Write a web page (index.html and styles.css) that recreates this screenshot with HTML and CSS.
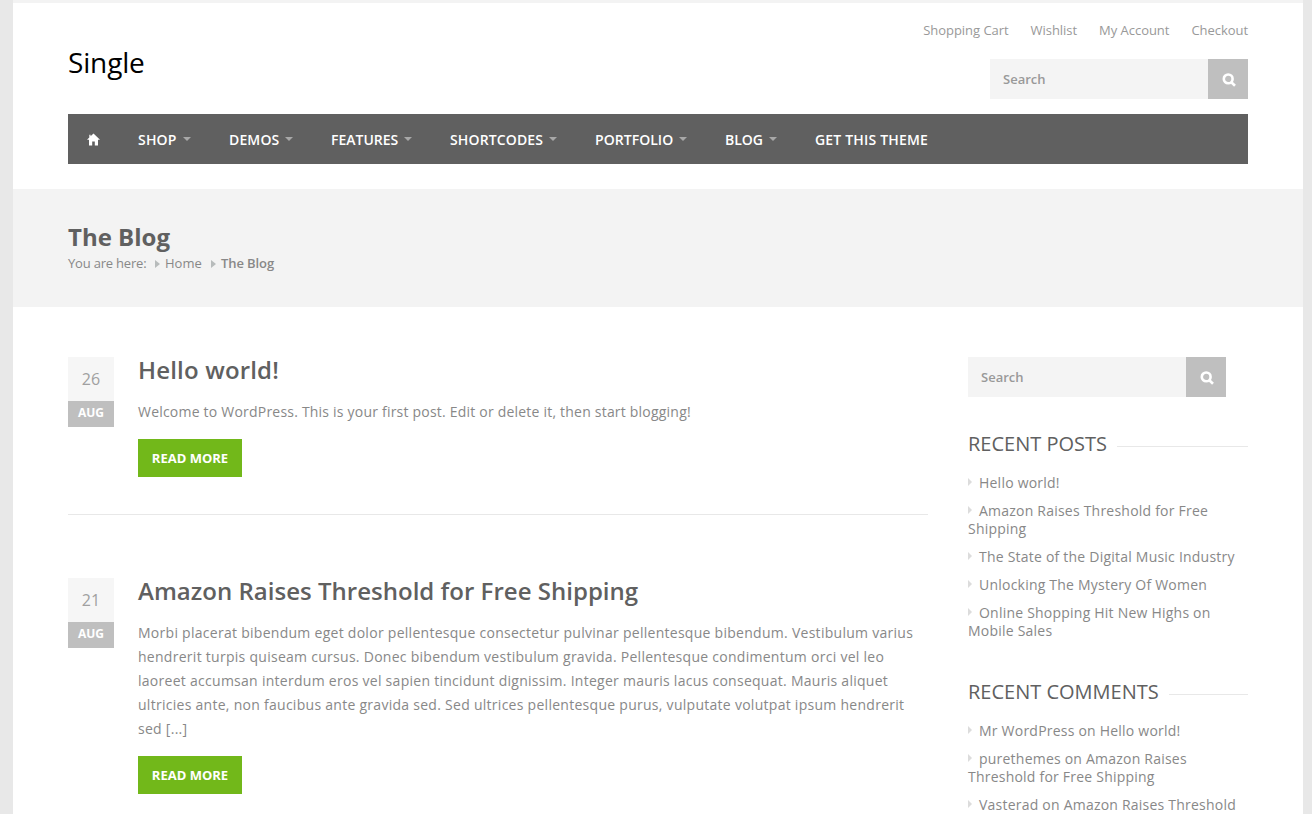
FILE: index.html
```html
<!DOCTYPE html>
<html lang="en">
<head>
<meta charset="utf-8">
<title>The Blog</title>
<link rel="stylesheet" href="styles.css">
</head>
<body>
<div class="wrapper">
  <header class="header container">
    <div class="header-top">
      <div class="logo">Single</div>
      <div class="header-side">
        <nav class="top-links"><a>Shopping Cart</a><a>Wishlist</a><a>My Account</a><a>Checkout</a></nav>
        <form class="search">
          <input type="text" placeholder="Search">
          <button type="button" aria-label="Search"><svg width="14" height="14" viewBox="0 0 14 14"><circle cx="6.2" cy="5.9" r="4.4"/><path d="M9.3 9.2l3.7 3.6"/></svg></button>
        </form>
      </div>
    </div>
    <nav class="menu">
      <a class="home"><svg width="13" height="13" viewBox="0 0 13 13"><path d="M6.5 0.4L13 6.8H11V12.5H7.8V8.6H5.2V12.5H2V6.8H0L2.3 4.5V1.8H3.6V3.2Z"/></svg></a>
      <a class="w-shop">SHOP<i class="caret"></i></a>
      <a class="w-demos">DEMOS<i class="caret"></i></a>
      <a class="w-features">FEATURES<i class="caret"></i></a>
      <a class="w-shortcodes">SHORTCODES<i class="caret"></i></a>
      <a class="w-portfolio">PORTFOLIO<i class="caret"></i></a>
      <a class="w-blog">BLOG<i class="caret"></i></a>
      <a class="w-theme">GET THIS THEME</a>
    </nav>
  </header>

  <section class="titlebar">
    <div class="container">
      <h1>The Blog</h1>
      <div class="crumbs"><span class="here">You are here:</span><i class="arrow"></i><a class="crumb-home">Home</a><i class="arrow"></i><span class="current">The Blog</span></div>
    </div>
  </section>

  <div class="content container">
    <main class="posts">
      <article class="post">
        <div class="date"><span class="day">26</span><span class="month">AUG</span></div>
        <div class="body">
          <h2 class="t1">Hello world!</h2>
          <p class="short">Welcome to WordPress. This is your first post. Edit or delete it, then start blogging!</p>
          <a class="button">READ MORE</a>
        </div>
      </article>
      <article class="post">
        <div class="date"><span class="day">21</span><span class="month">AUG</span></div>
        <div class="body">
          <h2 class="t2">Amazon Raises Threshold for Free Shipping</h2>
          <p>Morbi placerat bibendum eget dolor pellentesque consectetur pulvinar pellentesque bibendum. Vestibulum varius<br>hendrerit turpis quiseam cursus. Donec bibendum vestibulum gravida. Pellentesque condimentum orci vel leo<br>laoreet accumsan interdum eros vel sapien tincidunt dignissim. Integer mauris lacus consequat. Mauris aliquet<br>ultricies ante, non faucibus ante gravida sed. Sed ultrices pellentesque purus, vulputate volutpat ipsum hendrerit<br>sed [...]</p>
          <a class="button">READ MORE</a>
        </div>
      </article>
    </main>
    <aside class="sidebar">
      <form class="search">
        <input type="text" placeholder="Search">
        <button type="button" aria-label="Search"><svg width="14" height="14" viewBox="0 0 14 14"><circle cx="6.2" cy="5.9" r="4.4"/><path d="M9.3 9.2l3.7 3.6"/></svg></button>
      </form>
      <section class="widget">
        <h3><span>RECENT POSTS</span></h3>
        <ul>
          <li>Hello world!</li>
          <li>Amazon Raises Threshold for Free<br>Shipping</li>
          <li>The State of the Digital Music Industry</li>
          <li>Unlocking The Mystery Of Women</li>
          <li>Online Shopping Hit New Highs on<br>Mobile Sales</li>
        </ul>
      </section>
      <section class="widget">
        <h3><span>RECENT COMMENTS</span></h3>
        <ul>
          <li>Mr WordPress on Hello world!</li>
          <li>purethemes on Amazon Raises<br>Threshold for Free Shipping</li>
          <li>Vasterad on Amazon Raises Threshold</li>
        </ul>
      </section>
    </aside>
  </div>
</div>
</body>
</html>
```
FILE: styles.css
```css
* { box-sizing: border-box; }
html, body { margin: 0; height: 814px; overflow: hidden; }
body {
  background: #e8e8e8;
  color: #888;
  font: 14px/24px "Open Sans", "Noto Sans", sans-serif;
}
h1, h2, h3, p, ul { margin: 0; padding: 0; }
.wrapper {
  width: 1290px;
  height: 814px;
  margin-left: 13px;
  overflow: hidden;
  background: #fff;
  border-top: 3px solid #f3f3f3;
}
.container { width: 1180px; margin: 0 auto; }

.header { height: 186px; }
.header-top { display: flex; justify-content: space-between; height: 111px; }
.logo { padding-top: 41px; font-size: 28px; line-height: 36px; letter-spacing: -0.15px; color: #000; }
.header-side { display: flex; flex-direction: column; align-items: flex-end; }
.top-links {
  display: flex;
  gap: 22px;
  padding-top: 17px;
  height: 56px;
  font-size: 13px;
  line-height: 20px;
  letter-spacing: -0.04px;
  color: #999;
}
.search { display: flex; width: 258px; height: 40px; }
.search input {
  width: 218px;
  height: 40px;
  padding: 0 13px;
  border: 0;
  background: #f4f4f4;
  font: 600 13px "Open Sans", sans-serif;
}
.search input::placeholder { color: #999; opacity: 1; }
.search button {
  display: flex;
  align-items: center;
  justify-content: center;
  width: 40px;
  height: 40px;
  padding: 0;
  border: 0;
  background: #bfbfbf;
}
.search svg { fill: none; stroke: #fff; stroke-width: 2.6; margin: 1px 0 0 1px; }
.menu { display: flex; height: 50px; background: #606060; color: #fff; font-weight: 600; line-height: 51px; }
.menu a { display: flex; align-items: center; justify-content: space-between; padding: 0 19px; white-space: nowrap; }
.menu svg { fill: #fff; }
.menu .home { width: 51px; }
.w-shop { width: 91px; letter-spacing: 0.2px; }
.w-demos { width: 102px; letter-spacing: 0.15px; }
.w-features { width: 119px; }
.w-shortcodes { width: 145px; letter-spacing: 0.13px; }
.w-portfolio { width: 130px; letter-spacing: 0.04px; }
.w-blog { width: 90px; }
.w-theme { letter-spacing: 0.18px; }
.caret { border: 4px solid transparent; border-top-color: #a8a8a8; border-bottom: 0; margin-top: -1px; }

.titlebar { height: 118px; padding-top: 33px; background: #f3f3f3; }
.titlebar h1 { height: 31px; font-size: 24px; line-height: 30px; font-weight: 700; color: #606060; }
.crumbs { display: flex; align-items: center; height: 21px; font-size: 13px; line-height: 21px; }
.arrow { width: 0; border: 4px solid transparent; border-left: 5px solid #b8bcbc; border-right: 0; }
.here { width: 87px; letter-spacing: -0.2px; }
.crumb-home { box-sizing: content-box; width: 46px; padding-left: 5px; }
.current { padding-left: 5px; font-weight: 600; letter-spacing: -0.1px; }

.content { display: flex; justify-content: space-between; padding-top: 50px; }
.posts { width: 860px; }
.post { display: flex; gap: 24px; padding-bottom: 37px; margin-bottom: 63px; border-bottom: 1px solid #e8e8e8; }
.date { width: 46px; text-align: center; }
.day, .month { display: block; }
.day { height: 44px; background: #f6f6f6; color: #a0a0a0; font-size: 16px; line-height: 44px; }
.month { height: 26px; background: #bfbfbf; color: #fff; font-size: 12px; font-weight: 700; line-height: 24px; }
.body h2 { height: 43px; font-size: 24px; line-height: 26px; font-weight: 600; color: #606060; white-space: nowrap; }
.body .t1 { letter-spacing: 0.17px; }
.body .t2 { letter-spacing: 0.02px; }
.body p { white-space: nowrap; margin-bottom: 15px; letter-spacing: 0.275px; }
.body .short { letter-spacing: 0.21px; }
.button {
  display: block;
  width: 104px;
  height: 38px;
  background: #72b81a;
  color: #fff;
  font-size: 13px;
  font-weight: 700;
  line-height: 39px;
  text-align: center;
}
.sidebar { width: 280px; }
.widget { padding-top: 35px; }
.widget + .widget { padding-top: 30px; }
.widget h3 {
  display: flex;
  align-items: center;
  gap: 10px;
  height: 24px;
  margin-bottom: 18px;
  font-size: 20px;
  line-height: 24px;
  font-weight: 400;
  color: #606060;
  white-space: nowrap;
}
.widget h3::after { content: ""; flex: 1; height: 1px; margin-top: 5px; background: #e8e8e8; }
.widget li { list-style: none; line-height: 18px; margin-bottom: 10px; letter-spacing: 0.22px; white-space: nowrap; }
.widget li::before {
  content: "";
  display: inline-block;
  margin-right: 7px;
  vertical-align: 2px;
  border: 4px solid transparent;
  border-left-color: #dcdcdc;
  border-right: 0;
}
```
